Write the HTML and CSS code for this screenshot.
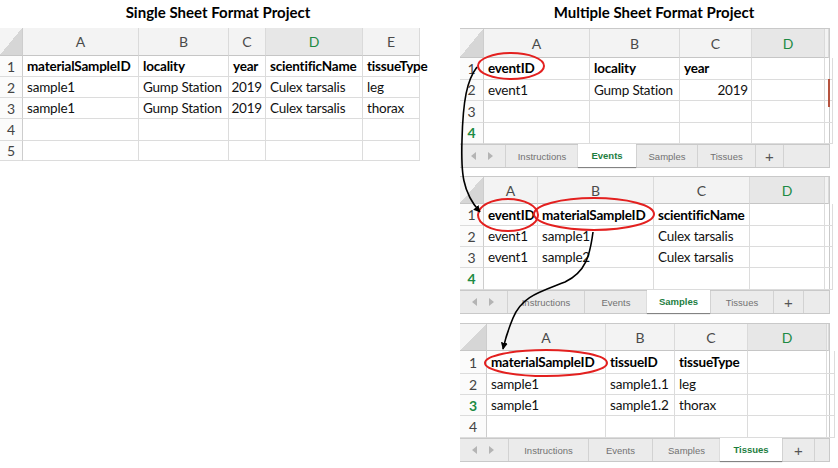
FILE: index.html
```html
<!DOCTYPE html>
<html>
<head>
<meta charset="utf-8">
<link rel="stylesheet" href="styles.css">
</head>
<body>
<div class="page">
  <section class="panel-left">
    <h2 class="title title-left">Single Sheet Format Project</h2>
    <div class="grid g0">
      <div class="corner"></div><div class="ch">A</div><div class="ch">B</div><div class="ch">C</div><div class="ch sel">D</div><div class="ch">E</div>
      <div class="rn">1</div><div class="c b">materialSampleID</div><div class="c b">locality</div><div class="c b">year</div><div class="c b">scientificName</div><div class="c b">tissueType</div>
      <div class="rn">2</div><div class="c">sample1</div><div class="c">Gump Station</div><div class="c num">2019</div><div class="c">Culex tarsalis</div><div class="c">leg</div>
      <div class="rn">3</div><div class="c">sample1</div><div class="c">Gump Station</div><div class="c num">2019</div><div class="c">Culex tarsalis</div><div class="c">thorax</div>
      <div class="rn">4</div><div class="c"></div><div class="c"></div><div class="c"></div><div class="c"></div><div class="c"></div>
      <div class="rn">5</div><div class="c"></div><div class="c"></div><div class="c"></div><div class="c"></div><div class="c"></div>
    </div>
  </section>

  <section class="panel-right">
    <h2 class="title title-right">Multiple Sheet Format Project</h2>

    <div class="sheet">
      <div class="grid g1">
        <div class="corner"></div><div class="ch">A</div><div class="ch">B</div><div class="ch">C</div><div class="ch sel">D</div><div class="ch"></div>
        <div class="rn">1</div><div class="c b">eventID</div><div class="c b">locality</div><div class="c b">year</div><div class="c"></div><div class="c"></div>
        <div class="rn">2</div><div class="c">event1</div><div class="c">Gump Station</div><div class="c num">2019</div><div class="c"></div><div class="c"></div>
        <div class="rn">3</div><div class="c"></div><div class="c"></div><div class="c"></div><div class="c"></div><div class="c"></div>
        <div class="rn green">4</div><div class="c"></div><div class="c"></div><div class="c"></div><div class="c"></div><div class="c"></div>
      </div>
      <div class="tabs t1">
        <div class="nav"><svg width="24" height="10" viewBox="0 0 24 10"><polygon points="6,1 6,9 1,5" fill="#b4b4b4"/><polygon points="18,1 18,9 23,5" fill="#b4b4b4"/></svg></div>
        <div class="tab">Instructions</div><div class="tab active">Events</div><div class="tab">Samples</div><div class="tab">Tissues</div><div class="tab plus">+</div><div class="tab"></div>
      </div>
    </div>

    <div class="sheet sheet-next">
      <div class="grid g2">
        <div class="corner"></div><div class="ch">A</div><div class="ch">B</div><div class="ch">C</div><div class="ch sel">D</div><div class="ch"></div>
        <div class="rn">1</div><div class="c b">eventID</div><div class="c b">materialSampleID</div><div class="c b">scientificName</div><div class="c"></div><div class="c"></div>
        <div class="rn">2</div><div class="c">event1</div><div class="c">sample1</div><div class="c">Culex tarsalis</div><div class="c"></div><div class="c"></div>
        <div class="rn">3</div><div class="c">event1</div><div class="c">sample2</div><div class="c">Culex tarsalis</div><div class="c"></div><div class="c"></div>
        <div class="rn green">4</div><div class="c"></div><div class="c"></div><div class="c"></div><div class="c"></div><div class="c"></div>
      </div>
      <div class="tabs t2">
        <div class="nav"><svg width="24" height="10" viewBox="0 0 24 10"><polygon points="6,1 6,9 1,5" fill="#b4b4b4"/><polygon points="18,1 18,9 23,5" fill="#b4b4b4"/></svg></div>
        <div class="tab">Instructions</div><div class="tab">Events</div><div class="tab active">Samples</div><div class="tab">Tissues</div><div class="tab plus">+</div><div class="tab"></div>
      </div>
    </div>

    <div class="sheet sheet-next">
      <div class="grid g3">
        <div class="corner"></div><div class="ch">A</div><div class="ch">B</div><div class="ch">C</div><div class="ch sel">D</div><div class="ch"></div>
        <div class="rn">1</div><div class="c b">materialSampleID</div><div class="c b">tissueID</div><div class="c b">tissueType</div><div class="c"></div><div class="c"></div>
        <div class="rn">2</div><div class="c">sample1</div><div class="c">sample1.1</div><div class="c">leg</div><div class="c"></div><div class="c"></div>
        <div class="rn green">3</div><div class="c">sample1</div><div class="c">sample1.2</div><div class="c">thorax</div><div class="c"></div><div class="c"></div>
        <div class="rn">4</div><div class="c"></div><div class="c"></div><div class="c"></div><div class="c"></div><div class="c"></div>
      </div>
      <div class="tabs t3">
        <div class="nav"><svg width="24" height="10" viewBox="0 0 24 10"><polygon points="6,1 6,9 1,5" fill="#b4b4b4"/><polygon points="18,1 18,9 23,5" fill="#b4b4b4"/></svg></div>
        <div class="tab">Instructions</div><div class="tab">Events</div><div class="tab">Samples</div><div class="tab active">Tissues</div><div class="tab plus">+</div><div class="tab"></div>
      </div>
    </div>
  </section>

  <svg class="overlay" width="838" height="468" viewBox="0 0 838 468">
    <defs>
      <marker id="ah" viewBox="0 0 10 10" refX="9" refY="5" markerWidth="7" markerHeight="7" orient="auto" markerUnits="userSpaceOnUse">
        <path d="M0,0 L10,5 L0,10 Z" fill="#000"/>
      </marker>
    </defs>
    <line x1="829" y1="79" x2="829" y2="107" stroke="#b5533f" stroke-width="2"/>
    <ellipse cx="511" cy="66" rx="33" ry="13" fill="none" stroke="#e3201f" stroke-width="2"/>
    <ellipse cx="508" cy="215" rx="30" ry="16" fill="none" stroke="#e3201f" stroke-width="2"/>
    <ellipse cx="594" cy="214" rx="60" ry="16" fill="none" stroke="#e3201f" stroke-width="2"/>
    <ellipse cx="546" cy="363" rx="61" ry="13" fill="none" stroke="#e3201f" stroke-width="2"/>
    <path d="M477,67 C467,80 463,100 462,140 C461,172 462,192 480,212" fill="none" stroke="#000" stroke-width="1.6" marker-end="url(#ah)"/>
    <path d="M593,232 C590,255 586,272 565,282 C540,292 522,296 513,318 C508,330 505,340 503,349" fill="none" stroke="#000" stroke-width="1.6" marker-end="url(#ah)"/>
  </svg>
</div>
</body>
</html>
```
FILE: styles.css
```css
* { box-sizing: border-box; margin: 0; padding: 0; }
html, body { background: #fff; }
body {
  font-family: Lato, "Open Sans", sans-serif;
  color: #111;
  width: 838px;
  height: 468px;
  overflow: hidden;
}
.page {
  position: relative;
  display: flex;
  width: 838px;
  height: 468px;
}
.panel-left { width: 460px; flex: none; }
.panel-right { width: 378px; flex: none; }

.title {
  font-size: 15px;
  font-weight: 700;
  height: 28px;
  line-height: 25px;
  text-align: center;
  color: #000;
  white-space: nowrap;
}
.title-left { width: 436px; }
.title-right { width: 370px; padding-left: 18px; }

.grid { display: grid; }
.g0 {
  width: 420px;
  grid-template-columns: 23px 116px 90px 37px 97px 57px;
  grid-template-rows: 28px 21px 21px 21px 22px 20px;
}
.g1 {
  grid-template-columns: 24px 106px 90px 72px 73px 4px;
  grid-template-rows: 29px 21.5px 21.5px 21.5px 21.5px;
}
.g2 {
  grid-template-columns: 24px 54px 116px 96px 75px 4px;
  grid-template-rows: 27px 22px 21px 21px 22px;
}
.g3 {
  grid-template-columns: 27px 119px 69px 73px 79px 2px;
  grid-template-rows: 27px 23px 21px 21px 22px;
}

.corner {
  background: linear-gradient(to bottom right, #f4f4f4 50%, #d6d6d6 50%);
  border-right: 1px solid #cdcdcd;
  border-bottom: 1px solid #c6c6c6;
}
.ch {
  background: #f3f3f3;
  border-right: 1px solid #dadada;
  border-bottom: 1px solid #c6c6c6;
  display: flex;
  align-items: center;
  justify-content: center;
  font-size: 14px;
  color: #4a4a4a;
}
.ch.sel { background: #e7e7e7; color: #1c8a43; }
.rn {
  background: #fbfbfb;
  border-right: 1px solid #cdcdcd;
  border-bottom: 1px solid #dcdcdc;
  display: flex;
  align-items: center;
  justify-content: center;
  font-size: 14px;
  color: #444;
}
.rn.green { color: #1c8a43; font-weight: 700; }
.c {
  border-right: 1px solid #dcdcdc;
  border-bottom: 1px solid #dcdcdc;
  display: flex;
  align-items: center;
  padding: 0 3px 0 4px;
  font-size: 13.5px;
  letter-spacing: -0.2px;
  white-space: nowrap;
  color: #111;
}
.c.b { font-weight: 700; color: #000; }
.c.num { justify-content: flex-end; }

.sheet {
  width: 370px;
  border: 1px solid #c9c9c9;
  border-left: none;
  background: #fff;
}
.sheet-next { margin-top: 8px; }
.sheet-next + .sheet-next { margin-top: 9px; }

.tabs {
  display: grid;
  height: 23px;
  background: #ebebeb;
  border-top: 1px solid #c9c9c9;
}
.t1 { grid-template-columns: 45px 73px 58px 61px 58px 28px 1fr; }
.t2 { grid-template-columns: 47px 77px 63px 63px 63px 30px 1fr; }
.t3 { grid-template-columns: 48px 80px 64px 68px 62px 32px 1fr; }
.nav {
  display: flex;
  align-items: center;
  justify-content: center;
  padding-right: 2px;
}
.tab {
  border-left: 1px solid #d2d2d2;
  display: flex;
  align-items: center;
  justify-content: center;
  font-family: "Liberation Sans", Arial, sans-serif;
  font-size: 9.5px;
  color: #727272;
  white-space: nowrap;
}
.tab.active {
  background: #fff;
  color: #1d7e3f;
  font-weight: 700;
  margin-top: -1px;
  box-shadow: 0 1px 1px rgba(0, 0, 0, 0.35);
  border-left: none;
}
.tab.plus { font-size: 15px; color: #555; }

.overlay {
  position: absolute;
  left: 0;
  top: 0;
  pointer-events: none;
}
```
